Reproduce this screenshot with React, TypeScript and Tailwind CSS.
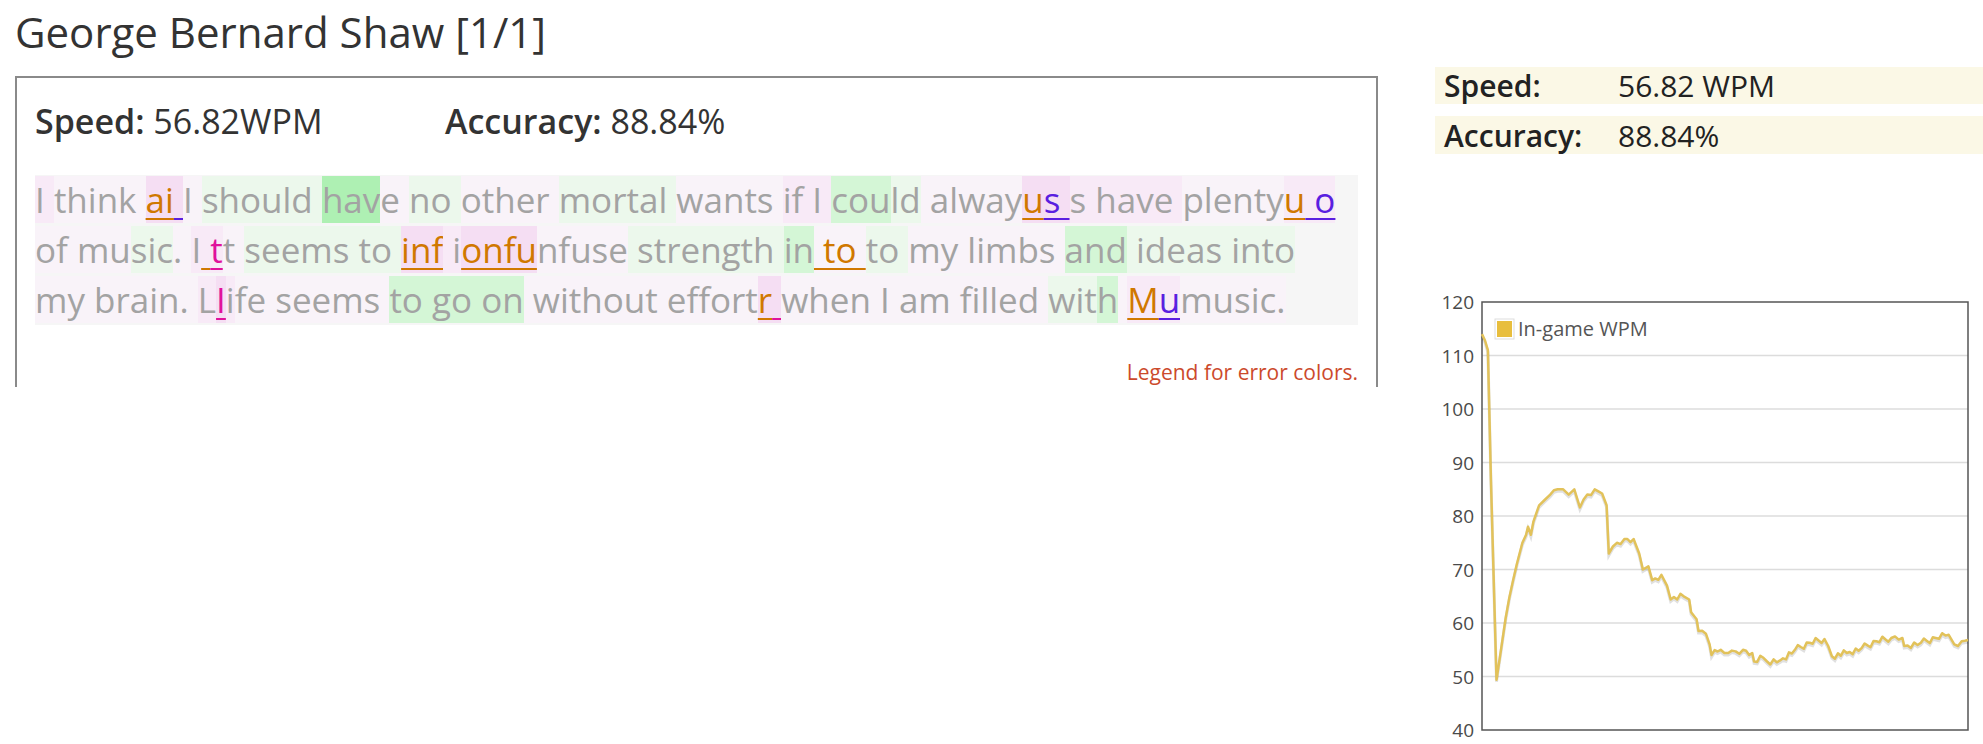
import React from 'react';

type Seg = [string, string, string?];

const bgClass: Record<string, string> = {
  f: 'bg-[#f9f3f9]',
  p: 'bg-[#f8eaf7]',
  P: 'bg-[#f5def3]',
  g: 'bg-[#ecf8ec]',
  G: 'bg-[#d4f6d6]',
  H: 'bg-[#aef0b3]',
};

const errClass: Record<string, string> = {
  o: 'text-[#d07800] underline decoration-2 underline-offset-[5px] decoration-[#d07800]',
  b: 'text-[#5a1ee0] underline decoration-2 underline-offset-[5px] decoration-[#5a1ee0]',
  m: 'text-[#e0129c] underline decoration-2 underline-offset-[5px] decoration-[#e0129c]',
};

const lines: Seg[][] = [
  [
    ['I ', 'p'], ['think ', 'f'], ['ai', 'P', 'o'], [' ', 'P', 'b'], ['I ', 'f'], ['should ', 'g'],
    ['hav', 'H'], ['e ', 'f'], ['no ', 'g'], ['other ', 'f'], ['mortal ', 'g'], ['wants ', 'f'],
    ['if I ', 'p'], ['cou', 'G'], ['ld', 'g'], [' alway', 'f'], ['u', 'P', 'o'], ['s ', 'P', 'b'],
    ['s have ', 'p'], ['plenty', 'f'], ['u', 'p', 'o'], [' o', 'p', 'b'],
  ],
  [
    ['of mu', 'f'], ['sic', 'g'], ['. ', 'f'], ['I', 'p'], [' ', 'p', 'o'], ['t', 'p', 'm'], ['t ', 'f'],
    ['seems', 'g'], [' to ', 'g'], ['inf', 'P', 'o'], [' ', 'p'], ['i', 'p'], ['onfu', 'P', 'o'],
    ['nfuse', 'f'], [' strength ', 'g'], ['in', 'G'], [' to ', 'f', 'o'], ['to ', 'g'],
    ['my limbs ', 'f'], ['and', 'G'], [' ideas', 'g'], [' into', 'g'],
  ],
  [
    ['my brain. ', 'f'], ['L', 'p'], ['I', 'P', 'm'], ['i', 'p'], ['fe seems ', 'f'], ['to go', 'G'],
    [' on', 'G'], [' without effort', 'f'], ['r', 'P', 'o'], [' ', 'P', 'm'], ['when I am filled ', 'f'],
    ['wit', 'g'], ['h', 'G'], [' ', 'f'], ['M', 'p', 'o'], ['u', 'p', 'b'], ['music.', 'f'],
  ],
];

// points read off the flot chart: [x 216..1527, value]
const raw: [number, number][] = [
  [216, 114], [232, 111], [240, 87], [255, 49.4], [265, 54], [280, 61], [300, 68], [310, 71],
  [325, 75], [335, 76.5], [340, 78], [348, 76.5], [355, 79], [370, 82], [385, 83], [400, 84],
  [420, 85], [435, 85], [450, 84], [465, 85], [480, 81.6], [500, 84], [520, 85], [540, 84.2],
  [552, 82], [558, 73], [580, 75], [600, 75.7], [625, 75.7], [640, 73], [650, 70], [665, 70.6],
  [675, 68], [700, 69], [715, 67], [725, 64.4], [760, 65], [775, 64.4], [780, 62], [795, 60.7],
  [800, 58.5], [820, 58], [830, 56], [835, 54], [860, 55], [880, 54.4], [900, 54.7], [920, 55],
  [945, 54.4], [950, 52.8], [975, 53.5], [985, 52.8], [1020, 53], [1060, 55], [1100, 56.3],
  [1140, 57], [1160, 53.8], [1200, 54.4], [1240, 55.3], [1280, 56.6], [1320, 57.2], [1350, 57.2],
  [1355, 55.7], [1400, 56.3], [1440, 57.2], [1475, 57.8], [1490, 56], [1510, 56.6], [1527, 56.8],
];

const PX0 = 47;
const PW = 486;
const PY0 = 17;
const PH = 428;

const sx = (px: number) => PX0 + ((px - 216) / (1527 - 216)) * PW;
const sy = (v: number) => PY0 + ((120 - v) / 80) * PH;

const buildPath = () => {
  const pts: [number, number][] = [];
  raw.forEach((p, i) => {
    pts.push([sx(p[0]), sy(p[1])]);
    const n = raw[i + 1];
    if (!n) return;
    const steps = Math.max(0, Math.floor((n[0] - p[0]) / 8));
    for (let k = 1; k < steps; k++) {
      const t = k / steps;
      const jit = (((i * 7 + k * 13) % 5) - 2) * 0.3;
      pts.push([sx(p[0] + (n[0] - p[0]) * t), sy(p[1] + (n[1] - p[1]) * t + jit)]);
    }
  });
  return pts.map((p, i) => `${i ? 'L' : 'M'}${p[0].toFixed(1)} ${p[1].toFixed(1)}`).join(' ');
};

const WpmChart: React.FC = () => {
  const d = buildPath();
  const ticks = [120, 110, 100, 90, 80, 70, 60, 50, 40];
  return (
    <svg width={548} height={459} className="block">
      {ticks.map((t) => (
        <g key={t}>
          {t !== 120 && t !== 40 && (
            <line x1={PX0} x2={PX0 + PW} y1={sy(t)} y2={sy(t)} stroke="#dcdcdc" strokeWidth={1.5} />
          )}
          <text
            x={39}
            y={sy(t) + 7}
            textAnchor="end"
            fontSize={19}
            fill="#4a4a4a"
            fontFamily="'Open Sans', sans-serif"
          >
            {t}
          </text>
        </g>
      ))}
      <rect x={PX0} y={PY0} width={PW} height={PH} fill="none" stroke="#555" strokeWidth={1.5} />
      <path d={d} fill="none" stroke="rgba(0,0,0,0.12)" strokeWidth={3} transform="translate(0,2)" />
      <path d={d} fill="none" stroke="#e2c25a" strokeWidth={2.5} strokeLinejoin="round" />
      <rect x={60} y={34} width={19} height={20} fill="#fff" stroke="#ddd" />
      <rect x={62} y={36} width={15} height={16} fill="#e8be3e" />
      <text x={83} y={51} fontSize={20} fill="#555" fontFamily="'Open Sans', sans-serif">
        In-game WPM
      </text>
    </svg>
  );
};

export default function App() {
  return (
    <div className="flex min-h-[744px] bg-white font-['Open_Sans',sans-serif] text-[#333]">
      {/* left column */}
      <div className="w-[1378px] shrink-0 pl-[15px]">
        <h1 className="pt-[8px] text-[42px] leading-[48px] font-normal">George Bernard Shaw [1/1]</h1>
        <div className="mt-[20px] h-[311px] border-2 border-b-0 border-[#8a8a8a] px-[18px] pt-[21px]">
          <div className="flex text-[34px] leading-[44px]">
            <div className="w-[410px]">
              <span className="font-semibold">Speed:</span> 56.82WPM
            </div>
            <div>
              <span className="font-semibold">Accuracy:</span> 88.84%
            </div>
          </div>
          <div className="mt-[32px] bg-[#f6f6f6] text-[35px] leading-[50px] text-[#a3a3a3] whitespace-pre">
            {lines.map((line, li) => (
              <div key={li}>
                {line.map(([t, bg, err], si) => (
                  <span key={si} className={`${bgClass[bg]} ${err ? errClass[err] : ''}`}>
                    {t}
                  </span>
                ))}
              </div>
            ))}
          </div>
          <div className="mt-[33px] text-right text-[21px] leading-[28px] text-[#cc4a2c]">
            Legend for error colors.
          </div>
        </div>
      </div>

      {/* right column */}
      <div className="ml-[57px] flex-1">
        <div className="mt-[67px] flex flex-col gap-[12px] text-[30px] text-[#222]">
          <div className="flex h-[37px] items-center bg-[#fbf8e6] pl-[9px]">
            <span className="w-[174px] font-semibold">Speed:</span>
            <span>56.82 WPM</span>
          </div>
          <div className="flex h-[38px] items-center bg-[#fbf8e6] pl-[9px]">
            <span className="w-[174px] font-semibold">Accuracy:</span>
            <span>88.84%</span>
          </div>
        </div>
        <div className="mt-[131px]">
          <WpmChart />
        </div>
      </div>
    </div>
  );
}
